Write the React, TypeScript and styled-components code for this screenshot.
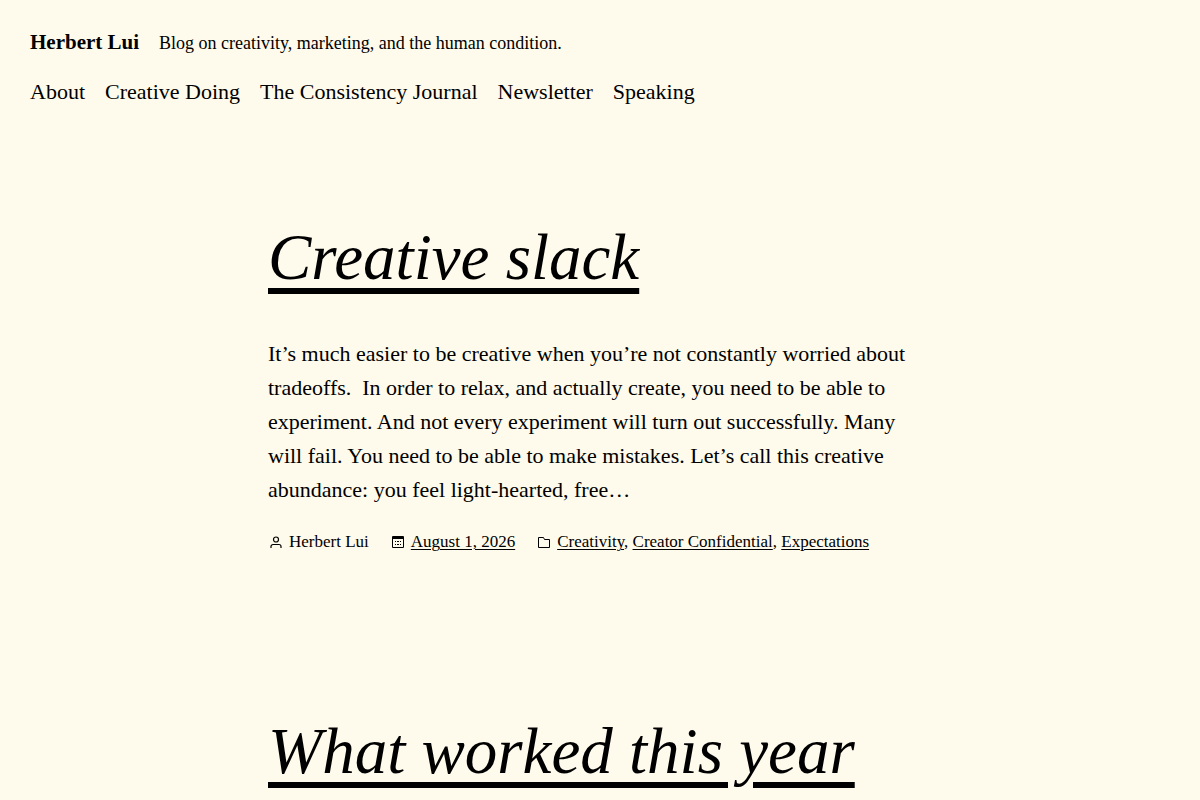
import React from "react";
import styled, { createGlobalStyle } from "styled-components";

const GlobalStyle = createGlobalStyle`
  *, *::before, *::after { box-sizing: border-box; }
  body {
    margin: 0;
    background: #fffbec;
    color: #000;
    font-family: "Source Serif Pro", "Liberation Serif", serif;
    font-size: 22px;
    line-height: 34px;
  }
  a { color: inherit; }
`;

const Header = styled.header`
  display: flex;
  flex-direction: column;
  gap: 15px;
  padding: 25px 30px 0;
`;

const Branding = styled.div`
  display: flex;
  flex-wrap: wrap;
  align-items: baseline;
  column-gap: 20px;
`;

const SiteTitle = styled.a`
  font-size: 21px;
  font-weight: 700;
  text-decoration: none;
`;

const Tagline = styled.p`
  margin: 0;
  font-size: 18px;
`;

const NavList = styled.ul`
  display: flex;
  flex-wrap: wrap;
  column-gap: 20px;
  margin: 0;
  padding: 0;
  list-style: none;
`;

const NavLink = styled.a`
  text-decoration: none;
`;

const Posts = styled.main`
  display: flex;
  flex-direction: column;
  gap: 154px;
  max-width: 704px;
  margin: 0 auto;
  padding: 108px 20px 0;
`;

const Post = styled.article`
  display: flex;
  flex-direction: column;
`;

const PostTitle = styled.h2`
  margin: 0;
  font-size: 65px;
  font-style: italic;
  font-weight: 400;
  line-height: 80px;
`;

const TitleLink = styled.a`
  text-decoration-thickness: 6px;
  text-underline-offset: 9px;
`;

const Excerpt = styled.p`
  max-width: 645px;
  margin: 40px 0 20px;
`;

const Meta = styled.footer`
  display: flex;
  flex-wrap: wrap;
  column-gap: 21px;
  font-size: 17px;
  line-height: 30px;
`;

const MetaItem = styled.span`
  display: inline-flex;
  align-items: center;
  gap: 5px;
`;

const MetaLink = styled.a`
  text-decoration-thickness: 1px;
  text-underline-offset: 2px;
`;

const Icon = styled.svg`
  flex: none;
  width: 16px;
  height: 16px;
`;

const navItems = ["About", "Creative Doing", "The Consistency Journal", "Newsletter", "Speaking"];
const categories = ["Creativity", "Creator Confidential", "Expectations"];

const PersonIcon = () => (
  <Icon viewBox="0 0 16 16" fill="none" stroke="currentColor" strokeWidth="1.2" aria-hidden="true">
    <circle cx="8" cy="5.500" r="2.500" />
    <path d="M3 14v-1.500a2 2 0 0 1 2-2h6a2 2 0 0 1 2 2V14" />
  </Icon>
);

const CalendarIcon = () => (
  <Icon viewBox="0 0 16 16" aria-hidden="true">
    <path fillRule="evenodd" d="M3 2h10a1 1 0 0 1 1 1v10a1 1 0 0 1-1 1H3a1 1 0 0 1-1-1V3a1 1 0 0 1 1-1zm0 3v8h10V5H3z" />
    <path d="M5 7h1v1H5zM7 7h2v1H7zM10 7h1v1h-1zM5 10h1v1H5zM7 10h2v1H7zM10 10h1v1h-1z" />
  </Icon>
);

const FolderIcon = () => (
  <Icon viewBox="0 0 16 16" fill="none" stroke="currentColor" aria-hidden="true">
    <path d="M2.500 3.500h5l1 2h5v8h-11z" strokeLinejoin="round" />
  </Icon>
);

export default function App() {
  return (
    <>
      <GlobalStyle />
      <Header>
        <Branding>
          <SiteTitle href="#">Herbert Lui</SiteTitle>
          <Tagline>Blog on creativity, marketing, and the human condition.</Tagline>
        </Branding>
        <nav aria-label="Main">
          <NavList>
            {navItems.map((item) => (
              <li key={item}>
                <NavLink href="#">{item}</NavLink>
              </li>
            ))}
          </NavList>
        </nav>
      </Header>
      <Posts>
        <Post>
          <PostTitle>
            <TitleLink href="#">Creative slack</TitleLink>
          </PostTitle>
          <Excerpt>
            It’s much easier to be creative when you’re not constantly worried about tradeoffs.&nbsp; In
            order to relax, and actually create, you need to be able to experiment. And not every
            experiment will turn out successfully. Many will fail. You need to be able to make mistakes.
            Let’s call this creative abundance: you feel light-hearted, free…
          </Excerpt>
          <Meta>
            <MetaItem>
              <PersonIcon />
              <span>Herbert Lui</span>
            </MetaItem>
            <MetaItem>
              <CalendarIcon />
              <MetaLink href="#">August 1, 2026</MetaLink>
            </MetaItem>
            <MetaItem>
              <FolderIcon />
              <span>
                {categories.map((category, index) => (
                  <React.Fragment key={category}>
                    {index > 0 && ", "}
                    <MetaLink href="#">{category}</MetaLink>
                  </React.Fragment>
                ))}
              </span>
            </MetaItem>
          </Meta>
        </Post>
        <Post>
          <PostTitle>
            <TitleLink href="#">What worked this year</TitleLink>
          </PostTitle>
        </Post>
      </Posts>
    </>
  );
}
